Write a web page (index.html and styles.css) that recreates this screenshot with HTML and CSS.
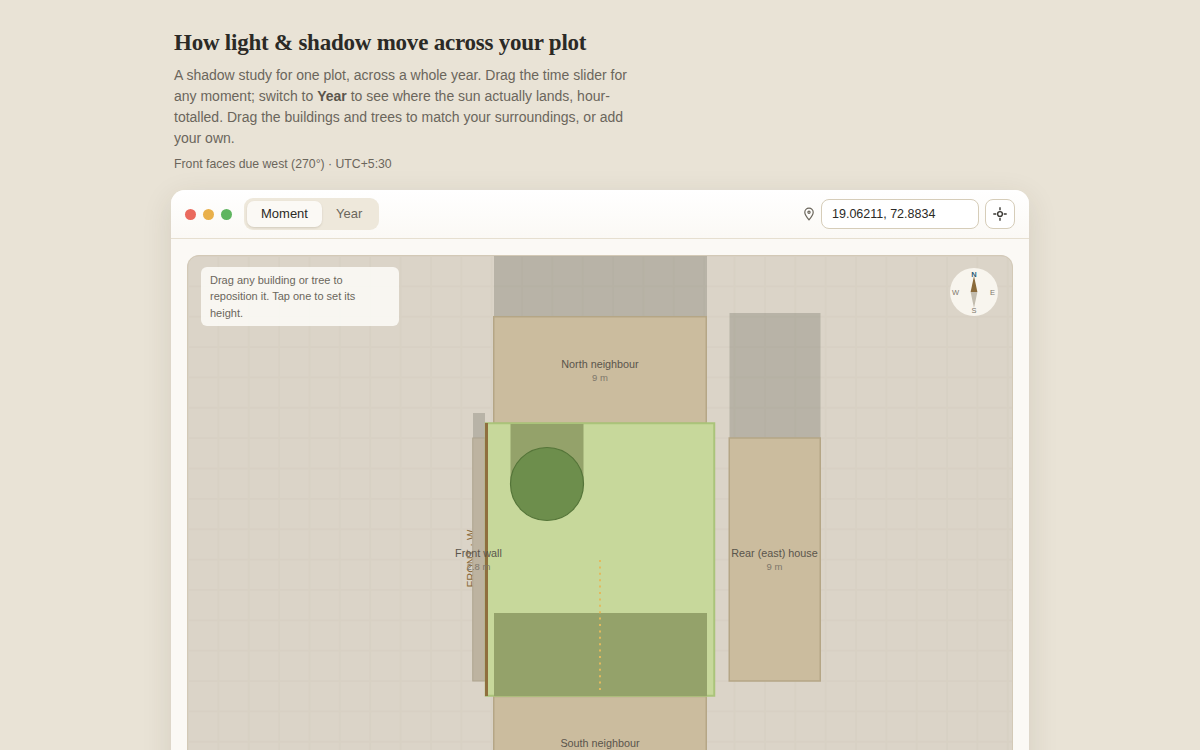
FILE: index.html
```html
<!DOCTYPE html>
<html lang="en">
<head>
    <meta charset="UTF-8">
    <meta name="viewport" content="width=device-width, initial-scale=1.0">
    <title>Light and Shadow Study</title>
    <link rel="stylesheet" href="styles.css">
</head>
<body>

    <div class="page">
        <header class="intro">
            <h1>How light &amp; shadow move across your plot</h1>
            <p class="lead">A shadow study for one plot, across a whole year. Drag the time slider for any moment; switch to <strong>Year</strong> to see where the sun actually lands, hour-totalled. Drag the buildings and trees to match your surroundings, or add your own.</p>
            <p class="note">Front faces due west (270°) · UTC+5:30</p>
        </header>

        <section class="card">
            <div class="toolbar">
                <div class="dots">
                    <span class="dot dot-red"></span>
                    <span class="dot dot-amber"></span>
                    <span class="dot dot-green"></span>
                </div>
                <div class="tabs">
                    <button class="tab tab-active">Moment</button>
                    <button class="tab">Year</button>
                </div>
                <div class="location">
                    <svg class="pin" width="14" height="14" viewBox="0 0 14 14">
                        <path d="M7 1.2c-2.4 0-4.2 1.8-4.2 4.1 0 2.9 4.2 7.5 4.2 7.5s4.2-4.6 4.2-7.5c0-2.3-1.8-4.1-4.2-4.1z"/>
                        <circle cx="7" cy="5.3" r="1.1"/>
                    </svg>
                    <input class="coords" type="text" value="19.06211, 72.8834">
                    <button class="locate">
                        <svg width="16" height="16" viewBox="0 0 16 16">
                            <circle cx="8" cy="8" r="2.4"/>
                            <path d="M8 1.3v3M8 11.7v3M1.3 8h3M11.7 8h3"/>
                        </svg>
                    </button>
                </div>
            </div>

            <div class="body">
                <div class="stage">
                    <svg class="scene" width="826" height="620" viewBox="0 0 826 620">
                        <defs>
                            <pattern id="grid" x="1" y="1" width="30.36" height="30.36" patternUnits="userSpaceOnUse">
                                <path class="grid-line" d="M0 0V30.36M30.36 0V30.36M0 0H30.36M0 30.36H30.36"/>
                            </pattern>
                        </defs>
                        <rect class="ground" width="826" height="620"/>
                        <rect width="826" height="620" fill="url(#grid)"/>

                        <!-- shadows on the ground -->
                        <rect class="shadow" x="307" y="0" width="213" height="62"/>
                        <rect class="shadow" x="542.5" y="58" width="91" height="125"/>
                        <rect class="shadow" x="286" y="158" width="12" height="25"/>

                        <text class="front-tag" transform="translate(288 332.5) rotate(-90)">FRONT · W</text>

                        <!-- neighbours -->
                        <rect class="building" x="306.75" y="61.75" width="212.5" height="106.5"/>
                        <rect class="building" x="542.25" y="183" width="91" height="243"/>
                        <rect class="building-thin" x="285.75" y="183" width="12.5" height="243"/>
                        <rect class="building" x="306.75" y="441.5" width="212.5" height="200"/>

                        <!-- plot -->
                        <rect class="plot" x="298.75" y="168.25" width="228.5" height="272.5"/>
                        <rect class="plot-shadow" x="323.5" y="169" width="73" height="61"/>
                        <rect class="plot-shadow" x="307" y="358" width="213" height="83"/>
                        <path class="front-wall" d="M299.5 168V441"/>
                        <path class="sun-line" d="M413 305V437"/>
                        <circle class="tree" cx="360" cy="229" r="36.5"/>

                        <text class="label" x="413" y="113">North neighbour</text>
                        <text class="sub" x="413" y="126">9 m</text>
                        <text class="label" x="291.5" y="302">Front wall</text>
                        <text class="sub" x="291.5" y="315">2.8 m</text>
                        <text class="label" x="587.5" y="302">Rear (east) house</text>
                        <text class="sub" x="587.5" y="315">9 m</text>
                        <text class="label" x="413" y="492">South neighbour</text>
                        <text class="sub" x="413" y="505">9 m</text>
                    </svg>

                    <div class="hint">Drag any building or tree to reposition it. Tap one to set its height.</div>

                    <svg class="compass" width="48" height="48" viewBox="0 0 48 48">
                        <circle class="compass-face" cx="24" cy="24" r="24"/>
                        <path class="needle-n" d="M24 8l3.4 16h-6.8z"/>
                        <path class="needle-s" d="M24 40l-3.4-16h6.8z"/>
                        <text class="compass-n" x="24" y="9">N</text>
                        <text class="compass-l" x="24" y="45">S</text>
                        <text class="compass-l" x="5.5" y="26.5">W</text>
                        <text class="compass-l" x="42.5" y="26.5">E</text>
                    </svg>
                </div>
            </div>
        </section>
    </div>

</body>
</html>
```

FILE: styles.css
```css
html, body {
    margin: 0;
    padding: 0;
}
body {
    font-family: 'Liberation Sans', Arial, sans-serif;
    background: #e9e3d6;
    color: #2b2a26;
}
.page {
    width: 858px;
    margin: 0 auto;
    padding-top: 28px;
}
.intro {
    padding: 0 3px;
    margin-bottom: 18px;
}
h1 {
    font-family: 'Liberation Serif', 'Times New Roman', serif;
    font-size: 23px;
    letter-spacing: -0.01em;
    line-height: 30px;
    font-weight: 700;
    margin: 0 0 7px;
    color: #2b2a26;
}
.lead {
    width: 460px;
    margin: 0 0 7px;
    font-size: 14px;
    line-height: 21px;
    color: #6b665c;
}
.lead strong {
    color: #5a554c;
}
.note {
    margin: 0;
    font-size: 12.25px;
    line-height: 16px;
    color: #6b665c;
}
.card {
    background: #fbf9f5;
    border-radius: 14px;
    box-shadow: 0 8px 30px rgba(60, 50, 30, 0.12);
    overflow: hidden;
}
.toolbar {
    display: flex;
    align-items: center;
    height: 48px;
    padding: 0 14px;
    background: linear-gradient(#ffffff, #fbf9f5);
    border-bottom: 1px solid #e6dfd0;
}
.dots {
    display: flex;
    gap: 7px;
    margin-right: 12px;
}
.dot {
    width: 11px;
    height: 11px;
    border-radius: 50%;
}
.dot-red {
    background: #ea6a5e;
}
.dot-amber {
    background: #e9b04b;
}
.dot-green {
    background: #5fb560;
}
.tabs {
    display: flex;
    padding: 3px;
    background: #eee8db;
    border-radius: 9px;
}
.tab {
    height: 26px;
    padding: 0 14px 1px;
    border: none;
    border-radius: 7px;
    background: transparent;
    font-family: inherit;
    font-size: 13px;
    color: #6b665c;
}
.tab-active {
    background: #fbf9f5;
    color: #2b2a26;
    box-shadow: 0 1px 2px rgba(60, 50, 30, 0.15);
}
.location {
    display: flex;
    align-items: center;
    margin-left: auto;
}
.pin {
    margin-right: 5px;
}
.pin path, .pin circle {
    fill: none;
    stroke: #6b665c;
    stroke-width: 1.2;
}
.coords {
    box-sizing: border-box;
    width: 158px;
    height: 30px;
    padding: 0 10px 1px;
    border: 1px solid #d6cdb9;
    border-radius: 8px;
    background: #fff;
    font-family: inherit;
    font-size: 12.5px;
    color: #2b2a26;
}
.locate {
    display: flex;
    align-items: center;
    justify-content: center;
    width: 30px;
    height: 30px;
    margin-left: 6px;
    padding: 0;
    border: 1px solid #d6cdb9;
    border-radius: 8px;
    background: #fff;
}
.locate circle, .locate path {
    fill: none;
    stroke: #3a3833;
    stroke-width: 1.4;
}
.body {
    padding: 16px;
}
.stage {
    position: relative;
    height: 620px;
    border-radius: 12px;
    overflow: hidden;
}
.stage::after {
    content: "";
    position: absolute;
    inset: 0;
    border: 1px solid #d3c9b6;
    border-radius: 12px;
    pointer-events: none;
}
.scene {
    display: block;
}
.ground {
    fill: #dbd4c8;
}
.grid-line {
    fill: none;
    stroke: #cfc7b8;
    stroke-width: 1.4;
    opacity: 0.32;
}
.shadow {
    fill: #7e7f72;
    opacity: 0.38;
}
.building {
    fill: #cbbc9e;
    stroke: #b5a686;
    stroke-width: 1.5;
}
.building-thin {
    fill: #bdb3a0;
    stroke: #aea48f;
    stroke-width: 1;
}
.plot {
    fill: #c7d89b;
    stroke: #aac47a;
    stroke-width: 2;
}
.plot-shadow {
    fill: #94a26a;
}
.front-wall {
    fill: none;
    stroke: #8f6f3e;
    stroke-width: 3;
}
.sun-line {
    fill: none;
    stroke: #e2b95e;
    stroke-width: 2;
    stroke-dasharray: 2 4.4;
}
.tree {
    fill: #6d8e4c;
    stroke: #557539;
    stroke-width: 1.2;
}
.label, .sub {
    font-family: 'Liberation Sans', Arial, sans-serif;
    text-anchor: middle;
}
.label {
    font-size: 10.8px;
    fill: #5a554c;
}
.sub {
    font-size: 9.5px;
    fill: #7d776b;
}
.front-tag {
    font-family: 'Liberation Sans', Arial, sans-serif;
    font-size: 11px;
    fill: #8a6a3a;
}
.hint {
    position: absolute;
    z-index: 1;
    top: 12px;
    left: 14px;
    box-sizing: border-box;
    width: 198px;
    padding: 4.7px 9px 4.8px;
    border-radius: 6px;
    background: rgba(251, 249, 245, 0.9);
    font-size: 11px;
    line-height: 16.5px;
    color: #6b665c;
}
.compass {
    position: absolute;
    z-index: 1;
    top: 13px;
    right: 15px;
}
.compass-face {
    fill: #f8f5ee;
}
.needle-n {
    fill: #8a6a3a;
}
.needle-s {
    fill: #c2bcae;
}
.compass-n, .compass-l {
    font-family: 'Liberation Sans', Arial, sans-serif;
    font-size: 7.5px;
    text-anchor: middle;
}
.compass-n {
    fill: #2f5f7a;
    font-weight: 700;
}
.compass-l {
    fill: #7d776b;
}
```
